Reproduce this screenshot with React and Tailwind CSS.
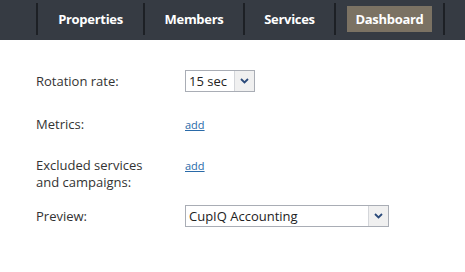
import React from 'react';

const tabs = [
  { name: 'Properties', w: 'w-[105px]' },
  { name: 'Members', w: 'w-[98px]' },
  { name: 'Services', w: 'w-[89px]' },
  { name: 'Dashboard', w: 'w-[107px]', active: true },
];

const Arrow = () => (
  <svg width="9" height="6" viewBox="0 0 9 6">
    <path d="M1 1 L4.5 4.5 L8 1" fill="none" stroke="#2b4a7a" strokeWidth="1.8" />
  </svg>
);

const Select = ({ value, className }) => (
  <div className={`flex h-[22px] border border-[#a9adb5] bg-white ${className}`}>
    <div className="flex-1 flex items-center pl-[3px] text-[13px] leading-[17px] text-[#222]">{value}</div>
    <div className="w-[20px] flex items-center justify-center border-l border-[#d4d6da] bg-[#f0f0f0]">
      <Arrow />
    </div>
  </div>
);

const App = () => {
  return (
    <div className="w-[465px] h-[272px] bg-white" style={{ fontFamily: '"Open Sans", sans-serif' }}>
      {/* nav */}
      <div className="h-[40px] bg-[#363b43] flex items-start pt-[3px] pl-[36px]">
        <div className="w-[2px] h-[32px] bg-[#1d2025]" />
        {tabs.map((t) => (
          <React.Fragment key={t.name}>
            <div className={`flex justify-center h-[32px] ${t.w} ${t.active ? 'items-start' : 'items-center'}`}>
              <span
                className={`text-[13px] font-bold text-white tracking-[-0.3px] leading-[26px] ${
                  t.active ? 'bg-[#7b7263] px-[8.5px] mt-[3px] h-[26px]' : ''
                }`}
              >
                {t.name}
              </span>
            </div>
            <div className="w-[2px] h-[32px] bg-[#1d2025]" />
          </React.Fragment>
        ))}
      </div>

      {/* form */}
      <div className="pl-[36px] pt-[30px] text-[13px] leading-[17px] text-[#333]">
        <div className="flex items-center h-[22px]">
          <div className="w-[149px]">Rotation rate:</div>
          <Select value="15 sec" className="w-[70px]" />
        </div>
        <div className="flex items-baseline mt-[24px]">
          <div className="w-[149px]">Metrics:</div>
          <a href="#" className="text-[11px] text-[#2a6aa8] underline">add</a>
        </div>
        <div className="flex items-baseline mt-[24px]">
          <div className="w-[149px]">Excluded services<br />and campaigns:</div>
          <a href="#" className="text-[11px] text-[#2a6aa8] underline">add</a>
        </div>
        <div className="flex items-center mt-[14px] h-[22px]">
          <div className="w-[149px]">Preview:</div>
          <Select value="CupIQ Accounting" className="w-[204px]" />
        </div>
      </div>
    </div>
  );
};

export default App;
